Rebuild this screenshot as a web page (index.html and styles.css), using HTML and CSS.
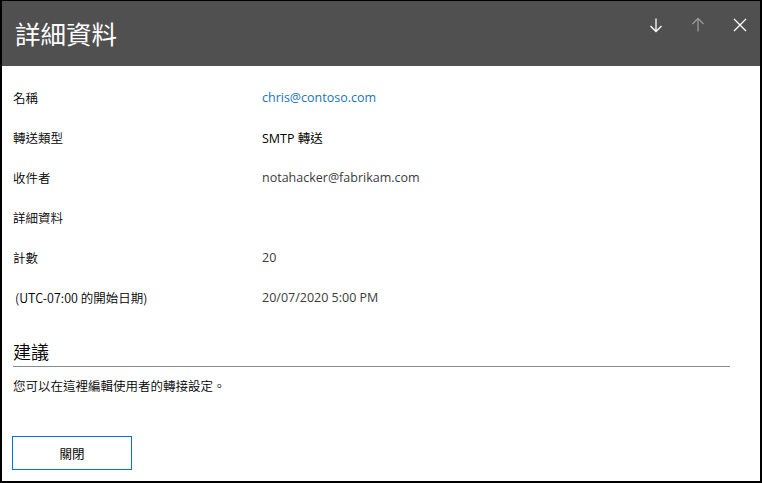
FILE: index.html
```html
<!DOCTYPE html>
<html lang="zh-Hant">
<head>
<meta charset="utf-8">
<link rel="stylesheet" href="styles.css">
</head>
<body>
<div class="panel">
  <header class="header">
    <h1 class="title">詳細資料</h1>
    <div class="actions">
      <span class="icon">
        <svg width="16" height="16" viewBox="0 0 16 16"><path d="M8 1.5v13M2.5 9L8 14.5 13.5 9" fill="none" stroke="#fff" stroke-width="1.3"/></svg>
      </span>
      <span class="icon dim">
        <svg width="16" height="16" viewBox="0 0 16 16"><path d="M8 14.5v-13M2.5 7L8 1.5 13.5 7" fill="none" stroke="#9a9a9a" stroke-width="1.3"/></svg>
      </span>
      <span class="icon">
        <svg width="16" height="16" viewBox="0 0 16 16"><path d="M2 2l12 12M14 2L2 14" fill="none" stroke="#fff" stroke-width="1.3"/></svg>
      </span>
    </div>
  </header>
  <main class="content">
    <div class="rows">
      <div class="row"><span class="label">名稱</span><span class="value link">chris@contoso.com</span></div>
      <div class="row"><span class="label">轉送類型</span><span class="value dark">SMTP 轉送</span></div>
      <div class="row"><span class="label">收件者</span><span class="value">notahacker@fabrikam.com</span></div>
      <div class="row"><span class="label">詳細資料</span><span class="value"></span></div>
      <div class="row"><span class="label">計數</span><span class="value">20</span></div>
      <div class="row"><span class="label indent">(UTC-07:00 的開始日期)</span><span class="value">20/07/2020 5:00 PM</span></div>
    </div>
    <h2 class="section">建議</h2>
    <p class="note">您可以在這裡編輯使用者的轉接設定。</p>
    <button class="btn">關閉</button>
  </main>
</div>
</body>
</html>
```
FILE: styles.css
```css
* { box-sizing: border-box; }
html, body { margin: 0; padding: 0; background: #fff; }
body {
  font-family: "Open Sans", "Noto Sans CJK TC", sans-serif;
  color: #000;
}
.panel {
  width: 762px;
  height: 483px;
  border-style: solid;
  border-color: #000;
  border-width: 1px 2px 2px 2px;
  display: flex;
  flex-direction: column;
  overflow: hidden;
}
.header {
  height: 65px;
  background: #505050;
  display: flex;
  align-items: flex-start;
  justify-content: space-between;
  flex-shrink: 0;
}
.title {
  margin: 15px 0 0 13px;
  font-family: "Noto Sans CJK TC", sans-serif;
  font-weight: 400;
  font-size: 25.5px;
  line-height: 34px;
  color: #fff;
}
.actions {
  display: flex;
  gap: 26px;
  margin: 16px 12px 0 0;
}
.icon { width: 16px; height: 16px; display: block; }
.icon:first-child { margin-right: 0; }
.icon svg { display: block; }
.content {
  padding: 11px 30px 0 11px;
  display: flex;
  flex-direction: column;
  align-items: flex-start;
}
.rows { display: flex; flex-direction: column; width: 100%; }
.row {
  height: 40px;
  display: flex;
  align-items: center;
  font-size: 12.5px;
}
.label {
  width: 249px;
  font-family: "Noto Sans CJK TC", sans-serif;
  font-weight: 350;
  color: #000;
}
.label.indent { padding-left: 2px; }
.value { color: #3b3b3b; }
.value.link { color: #1a73b8; }
.value.dark { color: #000; }
.section {
  margin: 22px 0 0 0;
  width: 100%;
  font-family: "Noto Sans CJK TC", sans-serif;
  font-weight: 350;
  font-size: 18px;
  line-height: 24px;
  padding-bottom: 3px;
  border-bottom: 1px solid #8a8a8a;
}
.note {
  margin: 10px 0 0 0;
  font-family: "Noto Sans CJK TC", sans-serif;
  font-weight: 350;
  font-size: 12.5px;
  line-height: 18px;
}
.btn {
  margin: 41px 0 0 -1px;
  width: 120px;
  height: 34px;
  background: #fff;
  border: 1px solid #0078d4;
  font-family: "Noto Sans CJK TC", sans-serif;
  font-size: 12.5px;
  color: #000;
  padding: 0;
}
```
